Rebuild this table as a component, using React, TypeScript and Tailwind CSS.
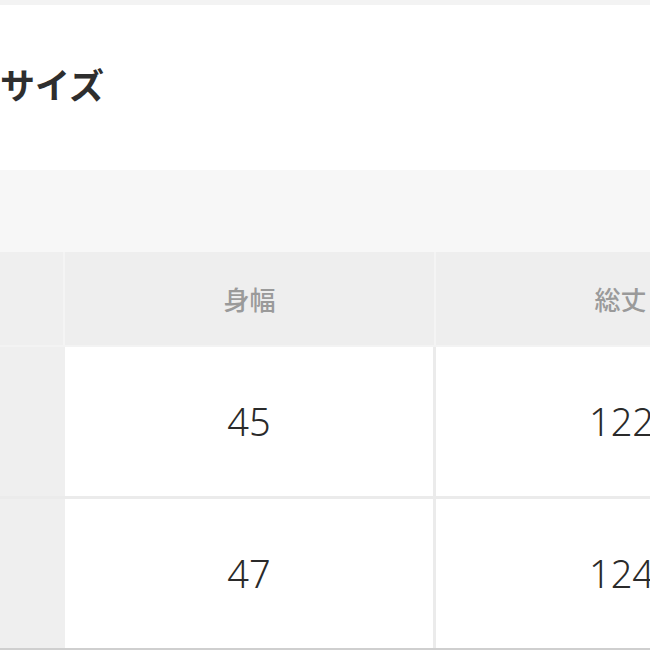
const headers = ["身幅", "総丈"];
const rows = [
  ["45", "122"],
  ["47", "124"],
];

const font = { fontFamily: '"Noto Sans CJK JP", "Noto Sans", sans-serif' };

export default function App() {
  return (
    <div className="w-[650px] h-[650px] overflow-hidden bg-white flex flex-col" style={font}>
      {/* top strip */}
      <div className="h-[5px] bg-[#f3f3f3] shrink-0" />

      {/* title */}
      <div className="h-[165px] shrink-0 flex items-start pt-[61px]">
        <h2 className="text-[35px] leading-none font-bold text-[#2e2e2e] whitespace-nowrap">
          サイズ
        </h2>
      </div>

      {/* band above table */}
      <div className="h-[82px] bg-[#f7f7f7] shrink-0" />

      {/* table */}
      <div className="flex flex-col w-[810px]">
        <div className="flex h-[93px] gap-[2px] bg-[#f4f4f4]">
          <div className="w-[63px] shrink-0 bg-[#efefef]" />
          {headers.map((h) => (
            <div
              key={h}
              className="w-[369px] shrink-0 bg-[#eeeeee] flex items-center justify-center text-[26px] font-medium text-[#9a9a9a]"
            >
              {h}
            </div>
          ))}
        </div>

        {rows.map((r, i) => (
          <div key={i} className={`flex h-[151px] border-t-[2px] ${i === 0 ? "border-[#f3f3f3]" : "border-[#ebebeb] h-[152px] border-t-[3px]"}`}>
            <div className="w-[65px] shrink-0 bg-[#efefef]" />
            {r.map((v, j) => (
              <div
                key={j}
                className={`w-[371px] shrink-0 bg-white flex items-center justify-center text-[38px] font-light text-[#2a2a2a] ${j === 0 ? "border-r-[3px] border-[#ebebeb]" : ""}`}
                style={{ fontFamily: '"Noto Sans", "Noto Sans CJK JP", sans-serif' }}
              >
                {v}
              </div>
            ))}
          </div>
        ))}
        <div className="h-[2px] bg-[#cfcfcf]" />
      </div>
    </div>
  );
}
